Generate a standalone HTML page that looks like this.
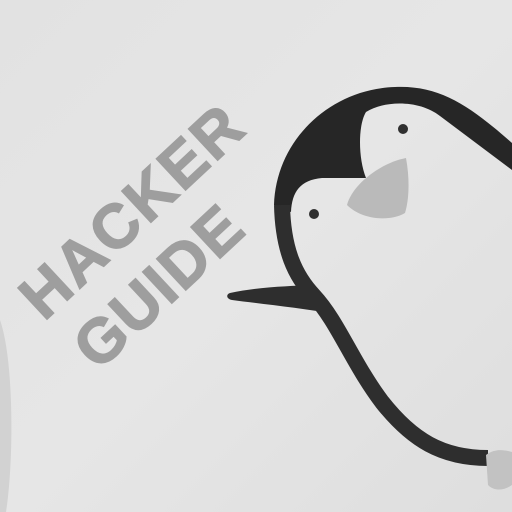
<!DOCTYPE html>
<html><head><style>
html,body{margin:0;padding:0;width:512px;height:512px;overflow:hidden;background:#e4e4e4}
svg{display:block}
</style></head><body>
<svg width="512" height="512" viewBox="0 0 512 512" xmlns="http://www.w3.org/2000/svg">
<defs>
<linearGradient id="bg" x1="0" y1="0" x2="1" y2="1">
<stop offset="0" stop-color="#e2e2e2"/><stop offset="0.5" stop-color="#e6e6e6"/><stop offset="1" stop-color="#dedede"/>
</linearGradient>
</defs>
<rect width="512" height="512" fill="url(#bg)"/>
<path d="M0,320 C14,360 14,460 6,512 L0,512 Z" fill="#d2d2d2"/>
<g font-family="Liberation Sans, sans-serif" font-weight="bold" fill="#9e9e9e" stroke="#9e9e9e" stroke-width="1.5">
<text transform="translate(44,322) rotate(-43)" font-size="62" textLength="278" lengthAdjust="spacing">HACKER</text>
<text transform="translate(98,372) rotate(-43)" font-size="62" textLength="204" lengthAdjust="spacing">GUIDE</text>
</g>
<!-- cap -->
<path d="M512,143 C470,106 440,85 395,87 C330,89 276,140 274,205 L291,212 C292,192 300,180 322,178 L366,178 C358,158 358,125 366,112 C385,100 420,100 440,116 L512,170 Z" fill="#262626"/>
<!-- body line -->
<path d="M282,205 C283,250 295,276 314,296 C338,322 352,362 382,402 C412,440 442,458 488,458" fill="none" stroke="#2e2e2e" stroke-width="16"/>
<!-- wing -->
<path d="M230,293 C258,287 290,286 312,285 L336,314 C300,308 262,304 232,300 C226,299 226,294 230,293 Z" fill="#2e2e2e"/>
<!-- beak -->
<path d="M347,205 C352,185 380,163 406,158 C410,180 409,200 405,213 C390,222 362,220 347,205 Z" fill="#bababa"/>
<circle cx="403" cy="129" r="5" fill="#303030"/>
<circle cx="314" cy="214" r="5" fill="#303030"/>
<!-- foot -->
<path d="M486,455 C495,448 505,450 512,452 L512,485 C505,490 495,492 488,485 Z" fill="#c2c2c2"/>
</svg>
</body></html>
